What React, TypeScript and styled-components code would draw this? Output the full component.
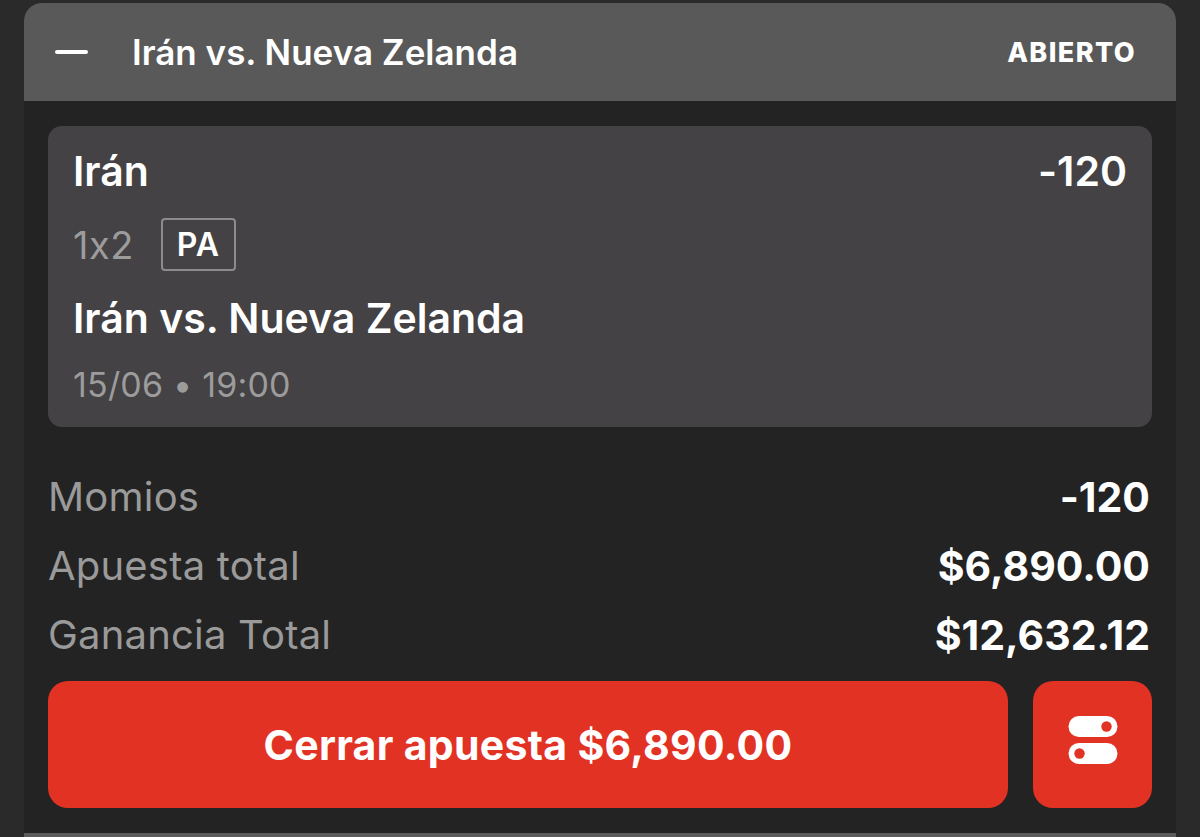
import React from "react";
import styled, { createGlobalStyle } from "styled-components";

const Global = createGlobalStyle`
  html, body { margin: 0; padding: 0; background: #2a2a2a; }
  body {
    font-family: Inter, "Noto Sans", sans-serif;
    font-feature-settings: "calt" 0;
    -webkit-font-smoothing: antialiased;
  }
  * { box-sizing: border-box; }
`;

const Page = styled.div`
  width: 1200px;
  height: 837px;
  padding: 3px 24px 0;
  overflow: hidden;
`;

const Panel = styled.section`
  background: #232323;
  border-top-left-radius: 18px;
  border-top-right-radius: 18px;
  border-bottom: 4px solid #5b5b5b;
`;

const Header = styled.header`
  height: 98px;
  background: #595959;
  border-top-left-radius: 18px;
  border-top-right-radius: 18px;
  display: flex;
  align-items: center;
  padding: 0 40px 0 31px;
  color: #fff;
`;

const Minus = styled.span`
  width: 33px;
  height: 4px;
  border-radius: 2px;
  background: #fff;
  margin-right: 44px;
`;

const HeaderTitle = styled.h1`
  margin: 0;
  flex: 1;
  font-size: 35px;
  font-weight: 600;
`;

const Status = styled.span`
  font-size: 27px;
  font-weight: 800;
  letter-spacing: 1.4px;
`;

const Body = styled.div`
  padding: 25px 24px 25px;
`;

const Card = styled.div`
  background: #444244;
  border-radius: 14px;
  padding: 23px 25px 22px;
  display: flex;
  flex-direction: column;
  gap: 25px;
  color: #fff;
`;

const CardRow = styled.div`
  display: flex;
  align-items: center;
  justify-content: space-between;
`;

const Strong = styled.span<{ $size: number }>`
  font-size: ${(p) => p.$size}px;
  line-height: 44px;
  font-weight: 600;
`;

const Market = styled.div`
  display: flex;
  align-items: center;
  gap: 27px;
`;

const Muted = styled.span<{ $size: number; $spacing?: number }>`
  font-size: ${(p) => p.$size}px;
  letter-spacing: ${(p) => p.$spacing ?? 0}px;
  color: #9c9c9c;
  font-weight: 400;
  line-height: 40px;
`;

const Badge = styled.span`
  height: 53px;
  min-width: 75px;
  border: 2px solid #8c8c8c;
  border-radius: 4px;
  display: inline-flex;
  align-items: center;
  justify-content: center;
  font-size: 32px;
  font-weight: 600;
  letter-spacing: 1px;
  color: #fff;
`;

const Stats = styled.div`
  margin-top: 35px;
  display: flex;
  flex-direction: column;
`;

const StatRow = styled.div`
  height: 69px;
  display: flex;
  align-items: center;
  justify-content: space-between;
`;

const StatLabel = styled.span`
  font-size: 40px;
  color: #9a9a9a;
  font-weight: 400;
  letter-spacing: 0.2px;
`;

const StatValue = styled.span`
  font-size: 41px;
  color: #fff;
  font-weight: 700;
  margin-right: 2px;
`;

const Actions = styled.div`
  margin-top: 12px;
  display: flex;
  gap: 25px;
`;

const CashoutButton = styled.button`
  flex: 1;
  height: 127px;
  border: none;
  border-radius: 20px;
  background: #e13224;
  color: #fff;
  font-family: inherit;
  font-size: 41px;
  font-weight: 700;
  letter-spacing: 0.3px;
  cursor: pointer;
`;

const IconButton = styled.button`
  width: 119px;
  height: 127px;
  border: none;
  border-radius: 20px;
  background: #e13224;
  display: flex;
  align-items: center;
  justify-content: center;
  padding: 0 0 10px;
  cursor: pointer;
`;

const ToggleIcon = () => (
  <svg width="50" height="50" viewBox="0 0 50 50">
    <rect x="0.5" y="1" width="49" height="21" rx="10.5" fill="#fff" />
    <circle cx="38.5" cy="11.5" r="5.2" fill="#e13224" />
    <rect x="0.5" y="28" width="49" height="21" rx="10.5" fill="#fff" />
    <circle cx="11.5" cy="38.5" r="5.2" fill="#e13224" />
  </svg>
);

const stats = [
  { label: "Momios", value: "-120" },
  { label: "Apuesta total", value: "$6,890.00" },
  { label: "Ganancia Total", value: "$12,632.12" },
];

export default function App() {
  return (
    <>
      <Global />
      <Page>
        <Panel>
          <Header>
            <Minus />
            <HeaderTitle>Irán vs. Nueva Zelanda</HeaderTitle>
            <Status>ABIERTO</Status>
          </Header>
          <Body>
            <Card>
              <CardRow>
                <Strong $size={41}>Irán</Strong>
                <Strong $size={41}>-120</Strong>
              </CardRow>
              <Market>
                <Muted $size={38} $spacing={0.5}>1x2</Muted>
                <Badge>PA</Badge>
              </Market>
              <CardRow>
                <Strong $size={41}>Irán vs. Nueva Zelanda</Strong>
              </CardRow>
              <CardRow>
                <Muted $size={34} $spacing={0.2}>15/06 • 19:00</Muted>
              </CardRow>
            </Card>
            <Stats>
              {stats.map((s) => (
                <StatRow key={s.label}>
                  <StatLabel>{s.label}</StatLabel>
                  <StatValue>{s.value}</StatValue>
                </StatRow>
              ))}
            </Stats>
            <Actions>
              <CashoutButton>Cerrar apuesta $6,890.00</CashoutButton>
              <IconButton aria-label="Ajustes">
                <ToggleIcon />
              </IconButton>
            </Actions>
          </Body>
        </Panel>
      </Page>
    </>
  );
}
